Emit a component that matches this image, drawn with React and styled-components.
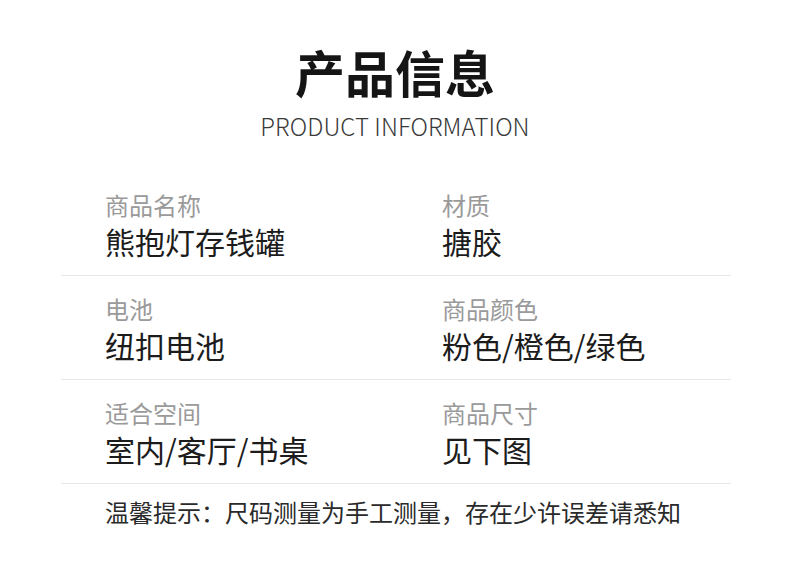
import React from "react";
import styled, { createGlobalStyle } from "styled-components";

const Global = createGlobalStyle`
  html, body { margin: 0; padding: 0; background: #ffffff; }
  body { font-family: "Noto Sans CJK SC", "Noto Sans", sans-serif; }
`;

const Page = styled.div`
  width: 790px;
  height: 570px;
  background: #ffffff;
  overflow: hidden;
`;

const Header = styled.header`
  padding-top: 41px;
  display: flex;
  flex-direction: column;
  align-items: center;
`;

const Title = styled.h1`
  margin: 0;
  font-size: 50px;
  line-height: 60px;
  font-weight: 700;
  color: #151515;
`;

const Subtitle = styled.div`
  margin-top: 10px;
  font-size: 24px;
  line-height: 30px;
  font-weight: 300;
  letter-spacing: 0.05px;
  color: #3a3a3a;
`;

const Table = styled.div`
  margin: 31px 0 0 61px;
  width: 670px;
`;

const Row = styled.div`
  display: grid;
  grid-template-columns: 337px 1fr;
  padding: 17px 0 15px 44px;
  border-bottom: 1px solid #e6e6e6;
`;

const Cell = styled.div`
  display: flex;
  flex-direction: column;
  gap: 1px;
`;

const Label = styled.div`
  font-size: 24px;
  line-height: 32px;
  color: #9a9a9a;
`;

const Value = styled.div`
  font-size: 30px;
  line-height: 38px;
  color: #1c1c1c;
`;

const Note = styled.p`
  margin: 0;
  padding: 12px 0 0 44px;
  font-size: 24px;
  line-height: 32px;
  color: #2a2a2a;
`;

const rows = [
  [
    ["商品名称", "熊抱灯存钱罐"],
    ["材质", "搪胶"],
  ],
  [
    ["电池", "纽扣电池"],
    ["商品颜色", "粉色/橙色/绿色"],
  ],
  [
    ["适合空间", "室内/客厅/书桌"],
    ["商品尺寸", "见下图"],
  ],
];

export default function App() {
  return (
    <Page>
      <Global />
      <Header>
        <Title>产品信息</Title>
        <Subtitle>PRODUCT INFORMATION</Subtitle>
      </Header>
      <Table>
        {rows.map((row, i) => (
          <Row key={i}>
            {row.map(([label, value]) => (
              <Cell key={label}>
                <Label>{label}</Label>
                <Value>{value}</Value>
              </Cell>
            ))}
          </Row>
        ))}
        <Note>温馨提示：尺码测量为手工测量，存在少许误差请悉知</Note>
      </Table>
    </Page>
  );
}
